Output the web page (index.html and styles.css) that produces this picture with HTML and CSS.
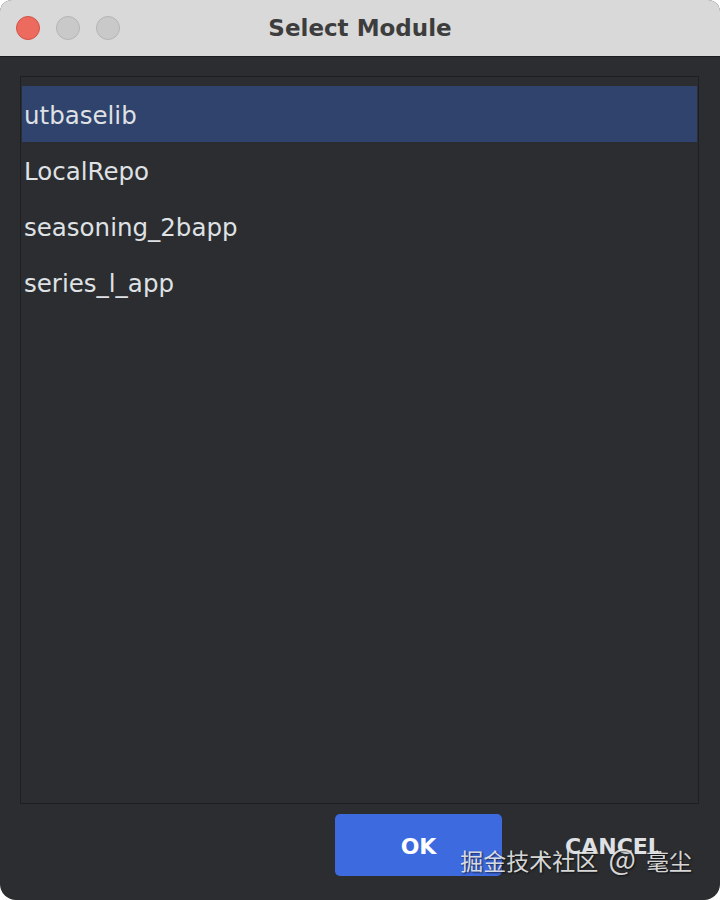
FILE: index.html
```html
<!DOCTYPE html>
<html lang="en">
<head>
  <meta charset="UTF-8" />
  <meta name="viewport" content="width=device-width, initial-scale=1" />
  <title>Select Module</title>
  <link rel="stylesheet" href="styles.css">
</head>
<body>
  <div class="window">
    <div class="titlebar">
      <div class="lights">
        <span class="light close"></span>
        <span class="light"></span>
        <span class="light"></span>
      </div>
      <div class="title">Select Module</div>
      <div></div>
    </div>
    <div class="content">
      <div class="list">
        <div class="row selected">utbaselib</div>
        <div class="row">LocalRepo</div>
        <div class="row">seasoning_2bapp</div>
        <div class="row">series_l_app</div>
      </div>
      <div class="buttons">
        <button class="btn btn-ok">OK</button>
        <button class="btn btn-cancel">CANCEL</button>
      </div>
    </div>
    <div class="watermark">掘金技术社区 <span class="at">@</span> 毫尘</div>
  </div>
</body>
</html>
```

FILE: styles.css
```css
body {
  margin: 0;
  background: #ffffff;
}
.window {
  position: relative;
  height: 900px;
  display: flex;
  flex-direction: column;
  background: #2b2d30;
  border-radius: 12px 12px 16px 16px;
  overflow: hidden;
}
.titlebar {
  height: 56px;
  flex: none;
  display: grid;
  grid-template-columns: 1fr auto 1fr;
  align-items: center;
  background: #d9d9d9;
  border-bottom: 1px solid #1b1c1e;
}
.lights {
  display: flex;
  gap: 16px;
  padding-left: 16px;
}
.light {
  width: 22px;
  height: 22px;
  border-radius: 50%;
  background: #c9c9c9;
  border: 1px solid #b5b5b5;
}
.light.close {
  background: #ec6a5e;
  border-color: #d35248;
}
.title {
  font-family: "DejaVu Sans", sans-serif;
  font-weight: bold;
  font-size: 23px;
  color: #3d3d3d;
}
.content {
  flex: 1;
  display: flex;
  flex-direction: column;
  padding: 19px 21px 0 20px;
}
.list {
  height: 728px;
  box-sizing: border-box;
  border: 1px solid #1e1f22;
  padding: 9px 1px 0;
}
.row {
  height: 52px;
  line-height: 52px;
  padding: 4px 0 0 2px;
  font-family: "DejaVu Sans", sans-serif;
  font-size: 24.5px;
  color: #dfe1e5;
}
.row.selected {
  background: #2f436c;
}
.buttons {
  display: flex;
  justify-content: flex-end;
  gap: 28px;
  margin-top: 10px;
  padding-right: 2px;
}
.btn {
  width: 167px;
  height: 62px;
  padding-top: 3px;
  border: none;
  border-radius: 5px;
  font-family: "DejaVu Sans", sans-serif;
  font-weight: bold;
  font-size: 22px;
  cursor: pointer;
}
.btn-ok {
  background: #3e6ae0;
  color: #ffffff;
}
.btn-cancel {
  background: transparent;
  color: #dfe1e5;
}
.watermark {
  position: absolute;
  right: 28px;
  bottom: 28px;
  font-family: "Noto Sans CJK SC", sans-serif;
  font-size: 23px;
  line-height: 1;
  word-spacing: 5px;
  color: rgba(240, 240, 240, 0.9);
  text-shadow: 1px 1px 2px rgba(0, 0, 0, 0.7);
}
.at {
  font-size: 29px;
}
```
